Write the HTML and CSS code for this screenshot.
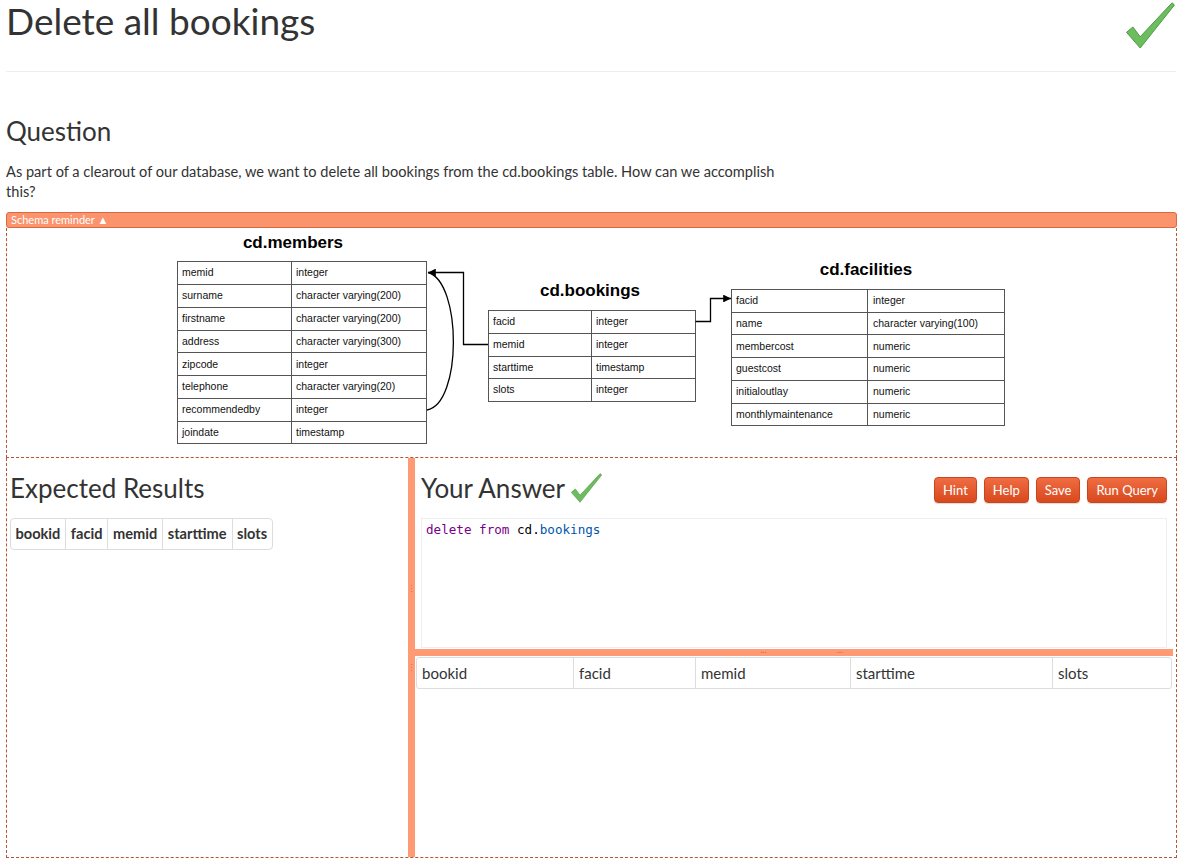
FILE: index.html
```html
<!DOCTYPE html>
<html>
<head>
<meta charset="utf-8">
<title>Delete all bookings</title>
<link rel="stylesheet" href="styles.css">
</head>
<body>
<div class="page">
  <header class="title-bar">
    <h1>Delete all bookings</h1>
    <svg class="check check-big" viewBox="0 0 50 48"><path d="M0.5 31 L7 25.5 L14.5 35.5 L47 0.8 L49.5 3 L14.5 47 Z"/></svg>
  </header>

  <h2 class="section-title">Question</h2>
  <p class="question">As part of a clearout of our database, we want to delete all bookings from the cd.bookings table. How can we accomplish this?</p>

  <div class="schema-toggle">Schema reminder ▲</div>
  <div class="schema-box">
    <svg class="schema" viewBox="7 229 1168 229" width="1168" height="229">
      <defs>
        <marker id="arr" viewBox="0 0 6 6" refX="6" refY="3" markerWidth="6" markerHeight="6" orient="auto">
          <path d="M0 0 L6 3 L0 6 Z" fill="#000"/>
        </marker>
      </defs>
      <g class="tbl">
        <text class="ttl" x="293" y="249">cd.members</text>
        <rect x="177.5" y="262.5" width="249" height="182"/>
        <line x1="291.5" y1="262.5" x2="291.5" y2="444.5"/>
        <line x1="177.5" y1="285.5" x2="426.5" y2="285.5"/>
        <line x1="177.5" y1="308.5" x2="426.5" y2="308.5"/>
        <line x1="177.5" y1="331.5" x2="426.5" y2="331.5"/>
        <line x1="177.5" y1="353.5" x2="426.5" y2="353.5"/>
        <line x1="177.5" y1="376.5" x2="426.5" y2="376.5"/>
        <line x1="177.5" y1="399.5" x2="426.5" y2="399.5"/>
        <line x1="177.5" y1="422.5" x2="426.5" y2="422.5"/>
        <text x="182" y="277">memid</text><text x="296" y="277">integer</text>
        <text x="182" y="300">surname</text><text x="296" y="300">character varying(200)</text>
        <text x="182" y="323">firstname</text><text x="296" y="323">character varying(200)</text>
        <text x="182" y="346">address</text><text x="296" y="346">character varying(300)</text>
        <text x="182" y="369">zipcode</text><text x="296" y="369">integer</text>
        <text x="182" y="391">telephone</text><text x="296" y="391">character varying(20)</text>
        <text x="182" y="414">recommendedby</text><text x="296" y="414">integer</text>
        <text x="182" y="437">joindate</text><text x="296" y="437">timestamp</text>
      </g>
      <g class="tbl">
        <text class="ttl" x="590" y="297">cd.bookings</text>
        <rect x="488.5" y="311.5" width="207" height="91"/>
        <line x1="591.5" y1="311.5" x2="591.5" y2="402.5"/>
        <line x1="488.5" y1="334.5" x2="695.5" y2="334.5"/>
        <line x1="488.5" y1="357.5" x2="695.5" y2="357.5"/>
        <line x1="488.5" y1="379.5" x2="695.5" y2="379.5"/>
        <text x="493" y="326">facid</text><text x="596" y="326">integer</text>
        <text x="493" y="349">memid</text><text x="596" y="349">integer</text>
        <text x="493" y="372">starttime</text><text x="596" y="372">timestamp</text>
        <text x="493" y="394">slots</text><text x="596" y="394">integer</text>
      </g>
      <g class="tbl">
        <text class="ttl" x="866" y="276">cd.facilities</text>
        <rect x="731.5" y="290.5" width="273" height="136"/>
        <line x1="867.5" y1="290.5" x2="867.5" y2="426.5"/>
        <line x1="731.5" y1="313.5" x2="1004.5" y2="313.5"/>
        <line x1="731.5" y1="335.5" x2="1004.5" y2="335.5"/>
        <line x1="731.5" y1="358.5" x2="1004.5" y2="358.5"/>
        <line x1="731.5" y1="381.5" x2="1004.5" y2="381.5"/>
        <line x1="731.5" y1="404.5" x2="1004.5" y2="404.5"/>
        <text x="736" y="305">facid</text><text x="873" y="305">integer</text>
        <text x="736" y="328">name</text><text x="873" y="328">character varying(100)</text>
        <text x="736" y="351">membercost</text><text x="873" y="351">numeric</text>
        <text x="736" y="373">guestcost</text><text x="873" y="373">numeric</text>
        <text x="736" y="396">initialoutlay</text><text x="873" y="396">numeric</text>
        <text x="736" y="419">monthlymaintenance</text><text x="873" y="419">numeric</text>
      </g>
      <g class="links">
        <path d="M488 345.5 H463.5 V273.5 H428" marker-end="url(#arr)"/>
        <path d="M427 411 C462 405, 462 283, 428 273.5"/>
        <path d="M695.5 322.5 H710.5 V299.5 H731" marker-end="url(#arr)"/>
      </g>
    </svg>
  </div>

  <div class="workspace">
    <section class="pane-left">
      <h2 class="pane-title">Expected Results</h2>
      <table class="expected">
        <thead><tr><th>bookid</th><th>facid</th><th>memid</th><th>starttime</th><th>slots</th></tr></thead>
      </table>
    </section>
    <div class="vsplit"><span class="grip">⋮</span><span class="grip">⋮</span></div>
    <section class="pane-right">
      <div class="answer-top">
        <div class="answer-head">
          <h2 class="pane-title">Your Answer</h2>
          <svg class="check check-small" viewBox="0 0 50 48"><path d="M0.5 31 L7 25.5 L14.5 35.5 L47 0.8 L49.5 3 L14.5 47 Z"/></svg>
          <div class="buttons">
            <button class="btn">Hint</button>
            <button class="btn">Help</button>
            <button class="btn">Save</button>
            <button class="btn">Run Query</button>
          </div>
        </div>
        <div class="editor"><code><span class="kw">delete</span> <span class="kw">from</span> cd.<span class="var">bookings</span></code></div>
      </div>
      <div class="hsplit"><span class="dots">...</span><span class="dots">...</span></div>
      <div class="answer-results">
        <table class="results">
          <colgroup><col class="c1"><col class="c2"><col class="c3"><col class="c4"><col class="c5"></colgroup>
          <thead><tr><th>bookid</th><th>facid</th><th>memid</th><th>starttime</th><th>slots</th></tr></thead>
        </table>
      </div>
    </section>
  </div>
</div>
</body>
</html>
```

FILE: styles.css
```css
* { box-sizing: border-box; }

html, body {
  margin: 0;
  padding: 0;
  background: #fff;
}

body {
  font-family: Lato, "Open Sans", sans-serif;
  color: #333;
  font-size: 14px;
}

.page {
  width: 1177px;
  padding-left: 6px;
}

.title-bar {
  display: flex;
  justify-content: space-between;
  align-items: flex-start;
  height: 72px;
  border-bottom: 1px solid #eee;
  margin-right: 1px;
}

.title-bar h1 {
  margin: 0;
  padding-top: 1px;
  font-size: 37px;
  font-weight: 400;
  line-height: 40px;
  color: #333;
}

.check path {
  fill: #6cbd5d;
  stroke: #4f9845;
  stroke-width: 1;
  stroke-linejoin: round;
}

.check-big {
  width: 49px;
  height: 47px;
  margin-top: 2px;
  margin-right: 1px;
}

.section-title {
  margin: 44px 0 0 0;
  font-size: 26px;
  font-weight: 400;
  line-height: 30px;
}

.question {
  margin: 16px 0 0 0;
  width: 775px;
  line-height: 20px;
  font-size: 14.6px;
}

.schema-toggle {
  margin-top: 10px;
  height: 16px;
  background: #fb936d;
  border: 1px solid #d86a43;
  border-radius: 3px;
  color: #fff;
  font-size: 11px;
  line-height: 13px;
  padding-left: 4px;
}

.schema-box {
  height: 230px;
  border-left: 1px dashed #b4562f;
  border-right: 1px dashed #b4562f;
  border-bottom: 1px dashed #b4562f;
}

.schema {
  display: block;
}

.tbl rect, .tbl line {
  fill: none;
  stroke: #555;
  stroke-width: 1;
}

.tbl text {
  font-family: "Liberation Sans", Arial, sans-serif;
  font-size: 10.5px;
  fill: #111;
}

.tbl text.ttl {
  font-size: 17px;
  font-weight: 700;
  text-anchor: middle;
  fill: #000;
}

.links path {
  fill: none;
  stroke: #000;
  stroke-width: 1.3;
}

.workspace {
  display: flex;
  height: 400px;
  border-left: 1px dashed #b4562f;
  border-right: 1px dashed #b4562f;
  border-bottom: 1px dashed #b4562f;
}

.pane-left {
  width: 401px;
  flex: none;
  padding: 15px 0 0 3px;
}

.pane-title {
  margin: 0;
  font-size: 26px;
  font-weight: 400;
  line-height: 30px;
  color: #333;
  white-space: nowrap;
}

.expected {
  margin-top: 15px;
  border-collapse: separate;
  border-spacing: 0;
  border: 1px solid #ddd;
  border-radius: 4px;
}

.expected th {
  font-size: 14.6px;
  font-weight: 700;
  padding: 5px 5px 5px 4.5px;
  line-height: 20px;
  border-left: 1px solid #ddd;
  color: #333;
}

.expected th:first-child { border-left: 0; }

.vsplit {
  width: 7px;
  flex: none;
  background: #ff9a74;
  display: flex;
  flex-direction: column;
  justify-content: center;
  align-items: center;
  gap: 70px;
  padding-bottom: 60px;
}

.grip {
  font-size: 9px;
  line-height: 9px;
  color: #c8714d;
}

.pane-right {
  flex: 1;
  display: flex;
  flex-direction: column;
  min-width: 0;
}

.answer-top {
  height: 191px;
  padding: 15px 9px 0 6px;
}

.answer-head {
  display: flex;
  align-items: flex-start;
  height: 30px;
}

.check-small {
  width: 31px;
  height: 30px;
  margin-left: 6px;
}

.buttons {
  margin-left: auto;
  display: flex;
  gap: 7px;
  padding-top: 4px;
}

.btn {
  height: 26px;
  padding: 0 8px;
  font-family: Lato, "Open Sans", sans-serif;
  font-size: 13px;
  color: #fff;
  background: linear-gradient(#f06c42, #d8491d);
  border: 1px solid #c9461d;
  border-radius: 4px;
  box-shadow: 0 1px 1px rgba(0,0,0,0.15);
}

.editor {
  margin-top: 15px;
  height: 130px;
  border: 1px solid #eee;
  padding: 3px 4px;
  font-family: "DejaVu Sans Mono", monospace;
  font-size: 12.6px;
  line-height: 16px;
  color: #000;
}

.kw { color: #708; }
.var { color: #05a; }

.hsplit {
  height: 7px;
  margin-right: 3px;
  background: #ff9a74;
  display: flex;
  justify-content: flex-end;
  gap: 70px;
  padding-right: 330px;
}

.dots {
  font-size: 9px;
  line-height: 2px;
  color: #c8714d;
}

.answer-results {
  padding: 1px 4px 0 1px;
}

.results {
  width: 100%;
  border-collapse: separate;
  border-spacing: 0;
  border: 1px solid #ddd;
  border-radius: 3px;
  table-layout: fixed;
}

.results .c1 { width: 156px; }
.results .c2 { width: 122px; }
.results .c3 { width: 155px; }
.results .c4 { width: 202px; }

.results th {
  text-align: left;
  font-size: 15px;
  font-weight: 400;
  line-height: 20px;
  padding: 5px 5px;
  border-left: 1px solid #ddd;
  color: #333;
}

.results th:first-child { border-left: 0; }
```
